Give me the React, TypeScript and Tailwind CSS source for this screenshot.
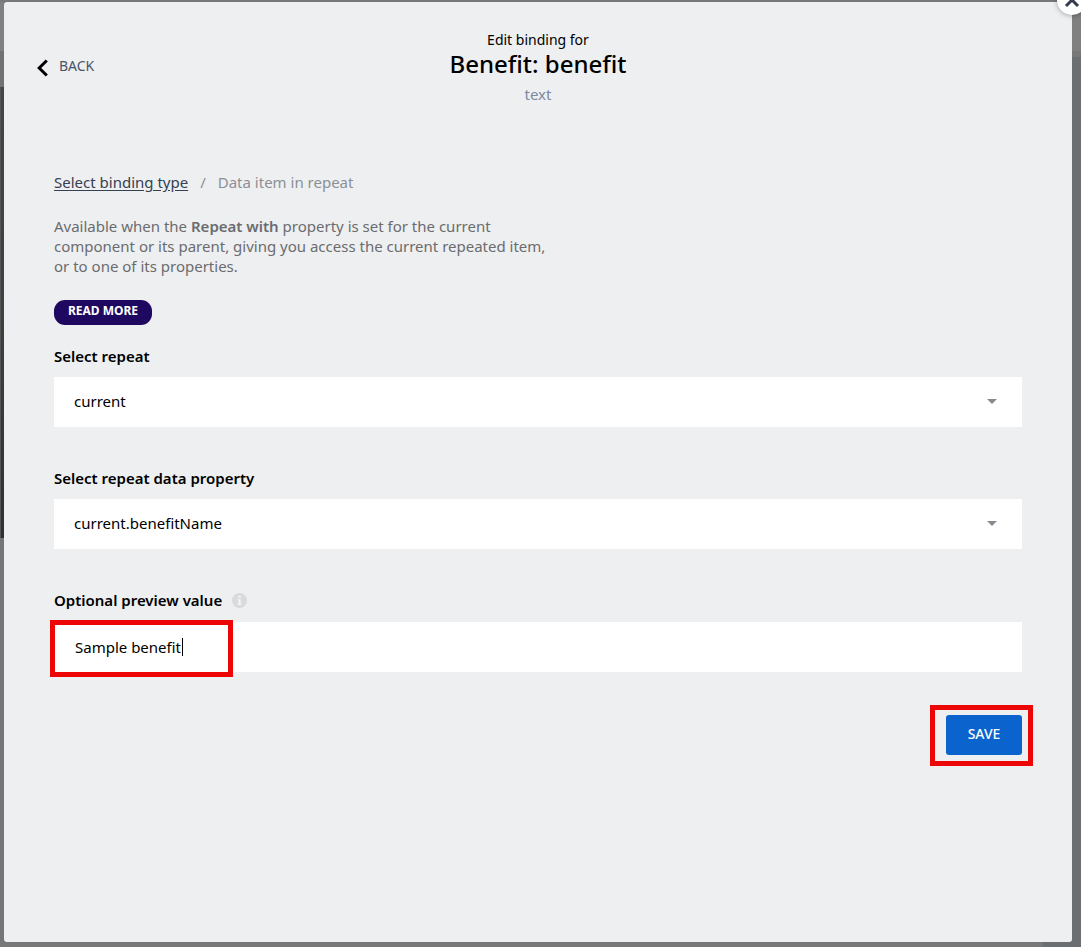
import { useState } from 'react';

function SelectField({ id, label, value }: { id: string; label: string; value: string }) {
  return (
    <div>
      <label htmlFor={id} className="block font-semibold text-black">
        {label}
      </label>
      <div className="relative mt-[11px]">
        <select
          id={id}
          defaultValue={value}
          className="block h-[50px] w-full appearance-none bg-white pr-12 pb-0.5 pl-5 text-black outline-none"
        >
          <option value={value}>{value}</option>
        </select>
        <svg
          className="pointer-events-none absolute top-[22px] right-[25px] h-[5px] w-[10px]"
          viewBox="0 0 10 5"
          aria-hidden="true"
        >
          <path d="M0 0h10L5 5z" fill="#858a91" />
        </svg>
      </div>
    </div>
  );
}

export default function App() {
  const [preview, setPreview] = useState('Sample benefit');

  return (
    <div className="flex min-h-screen flex-col overflow-hidden bg-[#767879] pt-0.5 font-['Noto_Sans',sans-serif] text-[15px] leading-5">
      <div className="flex grow">
        <div className="flex w-1 shrink-0 flex-col bg-[#767677]" aria-hidden="true">
          <div className="h-[49px] bg-[#808080]" />
          <div className="h-9 bg-[#727272]" />
          <div className="h-[451px] border-l border-[#4e555b] bg-linear-to-b from-[#454545] via-[#453f35] to-[#332f2c]" />
        </div>

        <main className="relative grow rounded-[3px] bg-[#eeeff1] px-[50px] pt-7 pb-[176px]">
          <button
            type="button"
            aria-label="Close"
            className="absolute -top-[17px] -right-[15px] flex size-[30px] items-center justify-center rounded-full bg-white shadow-[0_1px_5px_rgba(0,0,0,0.3)]"
          >
            <svg className="size-4" viewBox="0 0 16 16" fill="none" aria-hidden="true">
              <path d="M2 2l12 12M14 2L2 14" stroke="#343d4e" strokeWidth="3" />
            </svg>
          </button>

          <header className="relative text-center">
            <a
              href="#back"
              className="absolute top-[25px] -left-[17px] flex items-center gap-[11px] text-sm leading-5 text-[#4a5468]"
            >
              <svg className="mt-1 h-[18px] w-[11px]" viewBox="0 0 11 18" fill="none" aria-hidden="true">
                <path d="M9.8 1.5L2.2 9l7.6 7.5" stroke="#000" strokeWidth="3" />
              </svg>
              BACK
            </a>
            <p className="text-sm leading-5 text-black">Edit binding for</p>
            <h1 className="text-2xl leading-7 font-medium text-black">Benefit: benefit</h1>
            <p className="mt-1.5 text-[#7b89a3]">text</p>
          </header>

          <nav aria-label="Breadcrumb" className="mt-[68px] flex gap-3 text-[#8c8f95]">
            <a href="#binding-type" className="text-[#354052] underline underline-offset-2">
              Select binding type
            </a>
            <span>/</span>
            <span>Data item in repeat</span>
          </nav>

          <p className="mt-6 max-w-[510px] text-[#6b6c6e]">
            Available when the <strong className="font-semibold">Repeat with</strong> property is set for the current
            <br />
            component or its parent, giving you access the current repeated item,
            <br />
            or to one of its properties.
          </p>

          <a
            href="#read-more"
            className="mt-6 flex h-[25px] w-[98px] justify-center rounded-[11px] bg-[#1f0960] pt-px text-xs leading-5 font-bold text-white"
          >
            READ MORE
          </a>

          <form className="mt-[21px]" onSubmit={(event) => event.preventDefault()}>
            <div className="flex flex-col gap-[41px]">
              <SelectField id="repeat" label="Select repeat" value="current" />
              <SelectField id="property" label="Select repeat data property" value="current.benefitName" />
              <div>
                <div className="flex items-center gap-[10px]">
                  <label htmlFor="preview" className="font-semibold text-black">
                    Optional preview value
                  </label>
                  <svg className="size-[15px]" viewBox="0 0 15 15" aria-hidden="true">
                    <circle cx="7.5" cy="7.5" r="7.5" fill="#d8dadd" />
                    <path d="M6.4 2.8h2.3v2H6.4zM5.6 6.2h3.1v4.6h.9V12H5.6v-1.2h.9V7.4h-.9z" fill="#f3f4f5" />
                  </svg>
                </div>
                <div className="relative mt-3">
                  <input
                    id="preview"
                    type="text"
                    value={preview}
                    onChange={(event) => setPreview(event.target.value)}
                    className="block h-[50px] w-full bg-white px-[21px] text-black outline-none"
                  />
                  <span className="pointer-events-none absolute top-4 left-32 h-[18px] w-px bg-black" />
                  <span className="pointer-events-none absolute -top-0.5 -left-1 h-[57px] w-[183px] border-5 border-[#ec0606]" />
                </div>
              </div>
            </div>
            <div className="mt-[43px] flex justify-end">
              <div className="relative">
                <button
                  type="submit"
                  className="block h-10 w-[76px] rounded-[3px] bg-[#0b63ce] pb-0.5 text-sm leading-5 font-medium text-white"
                >
                  SAVE
                </button>
                <span className="pointer-events-none absolute -top-[10px] -right-[11px] h-[61px] w-[103px] border-5 border-[#ec0606]" />
              </div>
            </div>
          </form>
        </main>

        <div className="flex w-[9px] shrink-0 flex-col bg-[#6b6f72]" aria-hidden="true">
          <div className="h-[49px] bg-[#808080]" />
          <div className="h-1.5 bg-[#777879]" />
        </div>
      </div>
      <div className="flex h-[5px] justify-end" aria-hidden="true">
        <div className="w-[38px] bg-[#6b6f72]" />
      </div>
    </div>
  );
}
